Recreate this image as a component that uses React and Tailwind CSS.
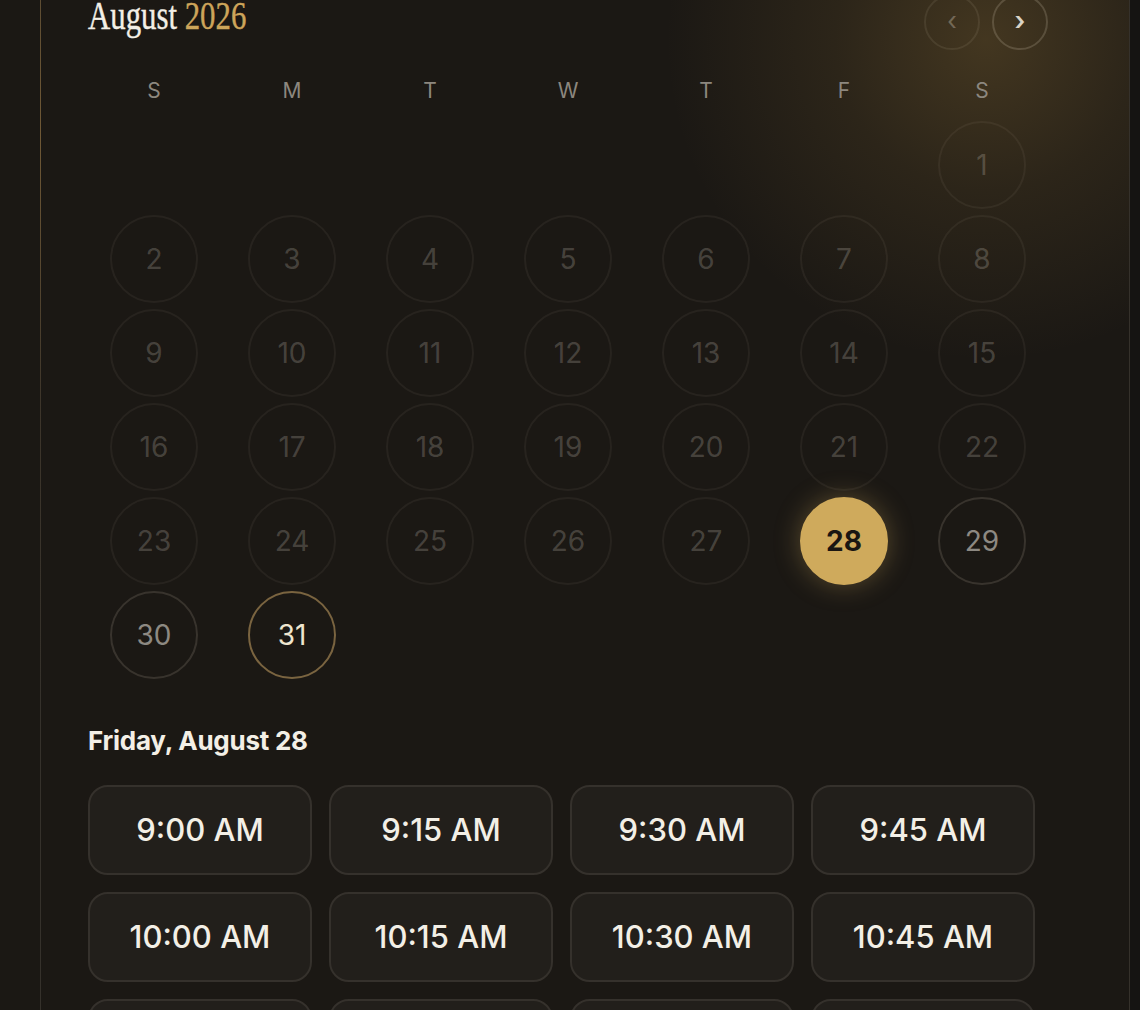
import { useState } from 'react';

const WEEKDAYS = ['S', 'M', 'T', 'W', 'T', 'F', 'S'];

const SLOTS = [
  '9:00 AM',
  '9:15 AM',
  '9:30 AM',
  '9:45 AM',
  '10:00 AM',
  '10:15 AM',
  '10:30 AM',
  '10:45 AM',
  '11:00 AM',
  '11:15 AM',
  '11:30 AM',
  '11:45 AM',
];

// August 2026 starts on a Saturday
const LEADING_BLANKS = 6;
const DAYS_IN_MONTH = 31;
const TODAY = 31;
const FIRST_OPEN_DAY = 28;

function DayCell({ day, selected, onSelect }) {
  const disabled = day < FIRST_OPEN_DAY;
  const isToday = day === TODAY;

  let tone = 'border-[rgba(255,240,220,0.055)] text-[rgba(255,246,232,0.2)]';
  if (selected) {
    tone = 'border-[#cfaa5c] bg-[#cfaa5c] font-bold text-[#1a1612] shadow-[0_0_26px_rgba(207,170,92,0.35)]';
  } else if (isToday) {
    tone = 'border-[#7a6440] text-[#efe6cf]';
  } else if (!disabled) {
    tone = 'border-[rgba(255,240,220,0.13)] text-[#8d8982]';
  }

  return (
    <div className="flex justify-center">
      <button
        type="button"
        disabled={disabled}
        onClick={() => onSelect(day)}
        className={`flex h-[88px] w-[88px] items-center justify-center rounded-full border-2 text-[28px] leading-none ${tone}`}
      >
        {day}
      </button>
    </div>
  );
}

export default function App() {
  const [selectedDay, setSelectedDay] = useState(28);
  const [selectedSlot, setSelectedSlot] = useState(null);

  const cells = [];
  for (let i = 0; i < LEADING_BLANKS; i++) cells.push(null);
  for (let d = 1; d <= DAYS_IN_MONTH; d++) cells.push(d);

  return (
    <div className="flex h-[1010px] overflow-hidden bg-[#1b1814] font-['Inter','Liberation_Sans',sans-serif]">
      <div className="w-10 shrink-0" />

      <div className="relative -mt-[54px] w-[1090px] shrink-0 border-x border-[#35312b] pl-[47px] pt-12">
        {/* warm glow behind the month nav */}
        <div className="pointer-events-none absolute inset-0 bg-[radial-gradient(circle_at_945px_94px,rgba(160,125,60,0.3),rgba(160,125,60,0.13)_150px,transparent_320px)]" />
        {/* gold accent on the left edge */}
        <div className="pointer-events-none absolute -left-px top-0 h-[760px] w-px bg-[linear-gradient(to_bottom,rgba(120,95,55,0.5),#6f5835_25%,#3d352a_60%,transparent)]" />

        <div className="relative w-[960px]">
          <div className="mb-[29px] flex h-14 items-start justify-between">
            <h2 className="mt-[2px] origin-left scale-x-[0.77] whitespace-nowrap font-['Liberation_Serif',serif] text-[40px] leading-[40px] text-[#f3efe6] [-webkit-text-stroke:0.4px_currentColor]">
              August <span className="text-[#cda55a]">2026</span>
            </h2>
            <div className="flex gap-3">
              <button
                type="button"
                disabled
                className="flex h-14 w-14 items-center justify-center rounded-full border-2 border-[rgba(255,240,220,0.08)] pb-1 text-[26px] text-[rgba(255,246,232,0.28)]"
              >
                ‹
              </button>
              <button
                type="button"
                className="flex h-14 w-14 items-center justify-center rounded-full border-2 border-[rgba(255,240,220,0.16)] pb-1 text-[26px] font-semibold text-[#d9d3c6]"
              >
                ›
              </button>
            </div>
          </div>

          <div className="mb-[18px] grid grid-cols-7 gap-x-1.5">
            {WEEKDAYS.map((w, i) => (
              <div key={i} className="h-6 text-center text-[21px] leading-6 text-[#8c877f]">
                {w}
              </div>
            ))}
          </div>

          <div className="grid grid-cols-7 gap-1.5">
            {cells.map((day, i) =>
              day === null ? (
                <div key={`b${i}`} className="h-[88px]" />
              ) : (
                <DayCell key={day} day={day} selected={day === selectedDay} onSelect={setSelectedDay} />
              ),
            )}
          </div>

          <h3 className="mb-7 mt-[46px] text-[26px] font-bold leading-8 tracking-[-0.01em] text-[#f3efe6]">
            Friday, August {selectedDay}
          </h3>

          <div className="grid w-[947px] grid-cols-4 gap-[17px]">
            {SLOTS.map((slot) => (
              <button
                key={slot}
                type="button"
                onClick={() => setSelectedSlot(slot)}
                className={`flex h-[90px] items-center justify-center rounded-[20px] border-2 text-[31px] font-medium ${
                  selectedSlot === slot
                    ? 'border-[#cfaa5c] bg-[#2a251c] text-[#f3efe6]'
                    : 'border-[#35312c] bg-[#221f1b] text-[#f3efe6]'
                }`}
              >
                {slot}
              </button>
            ))}
          </div>
        </div>
      </div>

      <div className="flex-1 bg-[#151412]" />
    </div>
  );
}
